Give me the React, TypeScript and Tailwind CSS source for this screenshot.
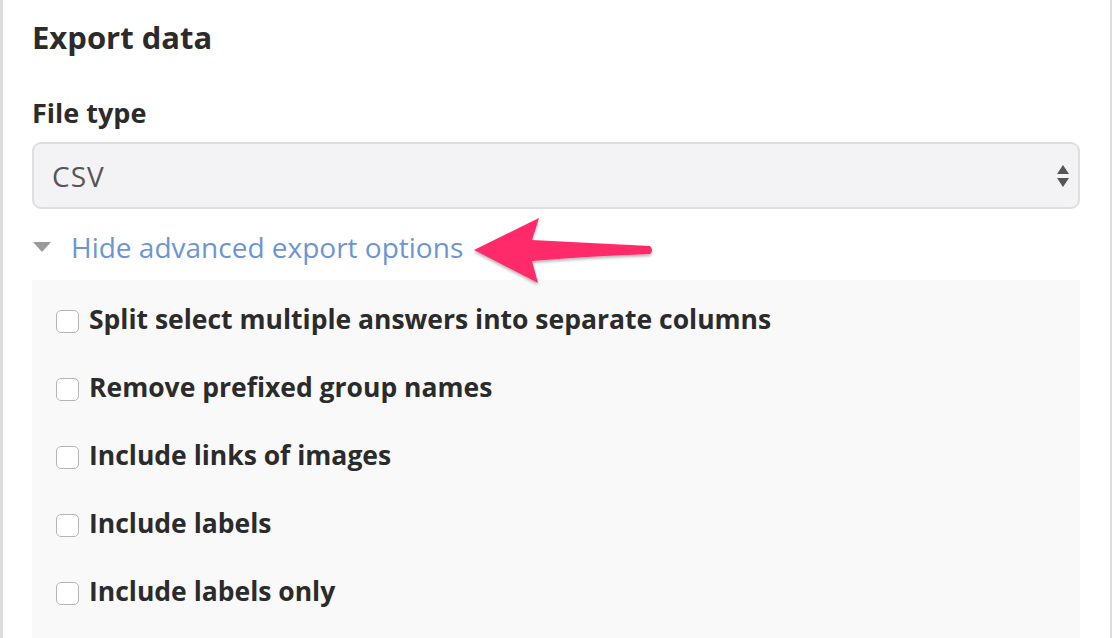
import { useState } from "react";

const options = [
  "Split select multiple answers into separate columns",
  "Remove prefixed group names",
  "Include links of images",
  "Include labels",
  "Include labels only",
];

const Arrow = () => (
  <svg width="200" height="80" viewBox="0 0 200 80" className="absolute left-[470px] top-[210px] pointer-events-none">
    <defs>
      <filter id="sh" x="-10%" y="-10%" width="120%" height="130%">
        <feDropShadow dx="0" dy="2" stdDeviation="1.5" floodColor="#000" floodOpacity="0.3" />
      </filter>
    </defs>
    <path
      d="M4 40 L69 8 L62 30 Q120 33 180 36 Q184 40 180 44 Q120 46 62 51 L68 73 Z"
      fill="#fe2c6b"
      filter="url(#sh)"
    />
  </svg>
);

export default function App() {
  const [checked, setChecked] = useState<boolean[]>(options.map(() => false));

  return (
    <div className="relative w-[1112px] h-[638px] overflow-hidden bg-white font-['Open_Sans',sans-serif]">
      <div className="h-full flex flex-col border-l-[3px] border-r-[2px] border-[#dcdcdc] pl-[29px] pr-[30px] pt-[18px]">
        <h1 className="text-[31px] font-bold text-[#2b2b2b] leading-[38px]">Export data</h1>

        <div className="mt-[41px] text-[27px] font-bold text-[#2b2b2b] leading-[32px]">File type</div>
        <div className="mt-[13px] h-[67px] shrink-0 rounded-[9px] border-2 border-[#dedede] bg-[#f3f3f5] flex items-center justify-between pl-[18px] pr-[8px]">
          <span className="text-[28px] tracking-[1px] text-[#555]">CSV</span>
          <svg width="14" height="26" viewBox="0 0 14 26">
            <path d="M7 2 L13 11 L1 11 Z" fill="#555" />
            <path d="M1 15 L13 15 L7 24 Z" fill="#555" />
          </svg>
        </div>

        <div className="mt-[20px] flex items-center gap-[20px] h-[36px] shrink-0">
          <svg width="18" height="10" viewBox="0 0 18 10" className="ml-[1px]">
            <path d="M0 0 L18 0 L9 10 Z" fill="#9a9a9a" />
          </svg>
          <span className="text-[28px] leading-[36px] text-[#6b95d6]">Hide advanced export options</span>
        </div>

        <div className="mt-[15px] flex-1 bg-[#f9f9f9] pl-[24px] pt-[21px] flex flex-col gap-[32px]">
          {options.map((label, i) => (
            <label key={label} className="flex items-center gap-[10px] h-[36px]">
              <input
                type="checkbox"
                checked={checked[i]}
                onChange={() => setChecked((prev) => prev.map((c, j) => (j === i ? !c : c)))}
                className="appearance-none w-[23px] h-[23px] translate-y-[2px] rounded-[5px] border border-[#b5b5b5] bg-white"
              />
              <span className="text-[26.5px] leading-[36px] font-bold text-[#2b2b2b]">{label}</span>
            </label>
          ))}
        </div>
      </div>
      <Arrow />
    </div>
  );
}
